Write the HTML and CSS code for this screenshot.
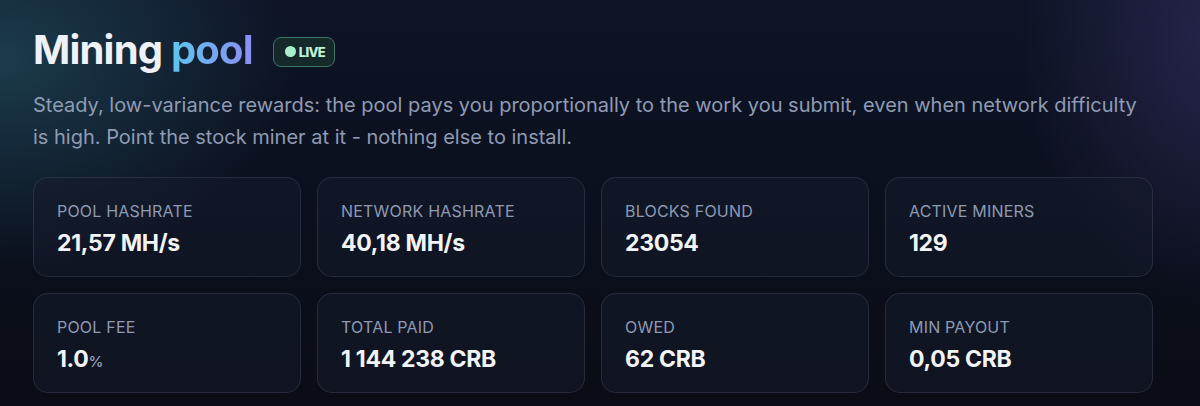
FILE: index.html
```html
<!DOCTYPE html>
<html>

<head>
    <meta charset="utf-8">
    <meta name="viewport" content="width=device-width, initial-scale=1.0">
    <title>Mining pool</title>
    <link rel="stylesheet" href="styles.css">
</head>

<body>
    <div class="page">
        <div class="head">
            <h1>Mining <span class="grad">pool</span></h1>
            <span class="live"><span class="dot"></span>LIVE</span>
        </div>
        <p class="lead">Steady, low-variance rewards: the pool pays you proportionally to the work you submit, even when network difficulty is high. Point the stock miner at it - nothing else to install.</p>
        <div class="stats">
            <div class="card">
                <div class="label">Pool hashrate</div>
                <div class="value">21,57 MH/s</div>
            </div>
            <div class="card">
                <div class="label">Network hashrate</div>
                <div class="value">40,18 MH/s</div>
            </div>
            <div class="card">
                <div class="label">Blocks found</div>
                <div class="value">23054</div>
            </div>
            <div class="card">
                <div class="label">Active miners</div>
                <div class="value">129</div>
            </div>
            <div class="card">
                <div class="label">Pool fee</div>
                <div class="value">1.0<span class="unit">%</span></div>
            </div>
            <div class="card">
                <div class="label">Total paid</div>
                <div class="value">1 144 238 CRB</div>
            </div>
            <div class="card">
                <div class="label">Owed</div>
                <div class="value">62 CRB</div>
            </div>
            <div class="card">
                <div class="label">Min payout</div>
                <div class="value">0,05 CRB</div>
            </div>
        </div>
    </div>
</body>

</html>
```

FILE: styles.css
```css
html,
body {
    margin: 0;
    padding: 0;
    height: 100%;
}

body {
    font-family: Inter, "Noto Sans", sans-serif;
    color: #e8ecf3;
    background-color: #0b0e18;
    background-image:
        radial-gradient(ellipse 420px 300px at 0px 60px, rgba(38, 92, 110, 0.55), transparent 70%),
        radial-gradient(ellipse 300px 380px at 1230px 40px, rgba(60, 52, 110, 0.55), transparent 70%),
        linear-gradient(180deg, #0e1426 0%, #0b0f1c 60%, #0a0d16 100%);
    overflow: hidden;
}

.page {
    width: 1120px;
    padding: 26px 0 0 33px;
}

.head {
    display: flex;
    align-items: center;
    gap: 20px;
}

h1 {
    margin: 0;
    font-size: 40px;
    line-height: 48px;
    font-weight: 700;
    letter-spacing: -0.8px;
    color: #eef1f7;
}

.grad {
    background: linear-gradient(90deg, #5cc6ef 0%, #8e8cf4 100%);
    -webkit-background-clip: text;
    background-clip: text;
    color: transparent;
}

.live {
    display: flex;
    align-items: center;
    gap: 3px;
    margin-top: 3px;
    height: 30px;
    box-sizing: border-box;
    padding: 0 9px 0 11px;
    border: 1px solid #3b7565;
    border-radius: 8px;
    background: #15292b;
    color: #c0f4d6;
    font-size: 13px;
    font-weight: 800;
    letter-spacing: -0.7px;
}

.dot {
    width: 11px;
    height: 11px;
    border-radius: 50%;
    background: #a9efcb;
}

.lead {
    margin: 15px 0 0;
    font-size: 20px;
    line-height: 32px;
    color: #8f9bb4;
    max-width: 1120px;
}

.stats {
    display: grid;
    grid-template-columns: repeat(4, 1fr);
    gap: 16px 16px;
    margin-top: 24px;
}

.card {
    height: 100px;
    box-sizing: border-box;
    padding: 24px 23px 0;
    border: 1px solid rgba(148, 163, 200, 0.16);
    border-radius: 15px;
    background: rgba(22, 28, 44, 0.55);
}

.label {
    font-size: 16px;
    line-height: 18px;
    text-transform: uppercase;
    letter-spacing: 0.2px;
    color: #8e9ab3;
}

.value {
    margin-top: 9px;
    font-size: 23px;
    line-height: 28px;
    font-weight: 700;
    letter-spacing: -0.3px;
    color: #f2f4f8;
}

.unit {
    font-size: 15px;
    font-weight: 500;
    color: #9aa4ba;
}
```
